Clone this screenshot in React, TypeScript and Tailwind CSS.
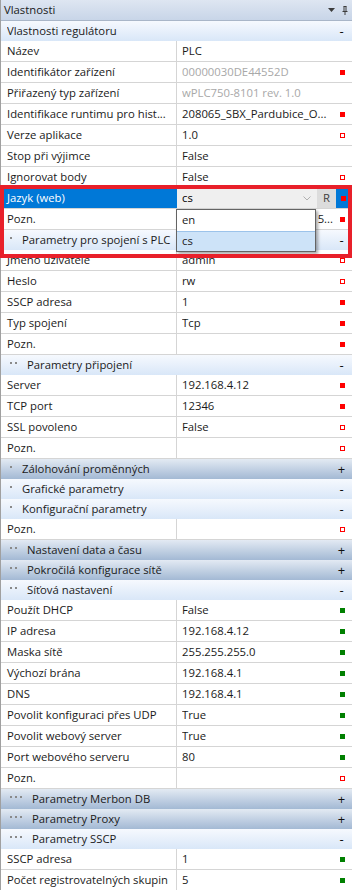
import React from "react";

type Marker = "fr" | "hr" | "fg" | null;
type Row =
  | { k: "s"; t: string; lvl: number; open: boolean }
  | { k: "p"; n: string; v?: string; gray?: boolean; m: Marker; sel?: boolean; right?: boolean };

const rows: Row[] = [
  { k: "s", t: "Vlastnosti regulátoru", lvl: 0, open: true },
  { k: "p", n: "Název", v: "PLC", m: null },
  { k: "p", n: "Identifikátor zařízení", v: "00000030DE44552D", gray: true, m: "fr" },
  { k: "p", n: "Přiřazený typ zařízení", v: "wPLC750-8101 rev. 1.0", gray: true, m: null },
  { k: "p", n: "Identifikace runtimu pro hist...", v: "208065_SBX_Pardubice_O...", m: "fr" },
  { k: "p", n: "Verze aplikace", v: "1.0", m: "hr" },
  { k: "p", n: "Stop při výjimce", v: "False", m: null },
  { k: "p", n: "Ignorovat body", v: "False", m: "hr" },
  { k: "p", n: "Jazyk (web)", v: "cs", m: "fr", sel: true },
  { k: "p", n: "Pozn.", v: "5...", m: "fr", right: true },
  { k: "s", t: "Parametry pro spojení s PLC", lvl: 1, open: true },
  { k: "p", n: "Jméno uživatele", v: "admin", m: "hr" },
  { k: "p", n: "Heslo", v: "rw", m: "hr" },
  { k: "p", n: "SSCP adresa", v: "1", m: "fr" },
  { k: "p", n: "Typ spojení", v: "Tcp", m: "fr" },
  { k: "p", n: "Pozn.", v: "", m: "fr" },
  { k: "s", t: "Parametry připojení", lvl: 2, open: true },
  { k: "p", n: "Server", v: "192.168.4.12", m: "fr" },
  { k: "p", n: "TCP port", v: "12346", m: "fr" },
  { k: "p", n: "SSL povoleno", v: "False", m: "hr" },
  { k: "p", n: "Pozn.", v: "", m: "hr" },
  { k: "s", t: "Zálohování proměnných", lvl: 1, open: false },
  { k: "s", t: "Grafické parametry", lvl: 1, open: true },
  { k: "s", t: "Konfigurační parametry", lvl: 1, open: true },
  { k: "p", n: "Pozn.", v: "", m: "hr" },
  { k: "s", t: "Nastavení data a času", lvl: 2, open: false },
  { k: "s", t: "Pokročilá konfigurace sítě", lvl: 2, open: false },
  { k: "s", t: "Síťová nastavení", lvl: 2, open: true },
  { k: "p", n: "Použít DHCP", v: "False", m: "fg" },
  { k: "p", n: "IP adresa", v: "192.168.4.12", m: "fg" },
  { k: "p", n: "Maska sítě", v: "255.255.255.0", m: "fg" },
  { k: "p", n: "Výchozí brána", v: "192.168.4.1", m: "fg" },
  { k: "p", n: "DNS", v: "192.168.4.1", m: "fg" },
  { k: "p", n: "Povolit konfiguraci přes UDP", v: "True", m: "fg" },
  { k: "p", n: "Povolit webový server", v: "True", m: "fg" },
  { k: "p", n: "Port webového serveru", v: "80", m: "fg" },
  { k: "p", n: "Pozn.", v: "", m: "hr" },
  { k: "s", t: "Parametry Merbon DB", lvl: 3, open: false },
  { k: "s", t: "Parametry Proxy", lvl: 3, open: false },
  { k: "s", t: "Parametry SSCP", lvl: 3, open: true },
  { k: "p", n: "SSCP adresa", v: "1", m: "fg" },
  { k: "p", n: "Počet registrovatelných skupin", v: "5", m: "fg" },
];

function Mark({ m }: { m: Marker }) {
  if (m === "fr") return <div className="h-[5px] w-[5px] shrink-0 bg-[#ff0000]" />;
  if (m === "fg") return <div className="h-[5px] w-[5px] shrink-0 bg-[#008000]" />;
  if (m === "hr") return <div className="h-[5px] w-[5px] shrink-0 border border-[#ff0000] bg-white" />;
  return <div className="h-[5px] w-[5px] shrink-0" />;
}

function Section({ t, lvl, open }: { t: string; lvl: number; open: boolean }) {
  const dots = Array.from({ length: lvl });
  return (
    <div
      className={
        "flex h-[20px] shrink-0 items-center pr-[5px] " +
        (open
          ? "bg-linear-to-b from-[#f6f9fe] to-[#d9e7f8]"
          : "bg-linear-to-b from-[#e3eaf3] to-[#a3b9d4]")
      }
    >
      {lvl === 0 ? (
        <div className="w-[6px] shrink-0" />
      ) : (
        <div className="flex shrink-0 items-center gap-[3px] pl-[9px]" style={{ width: 21 + (lvl - 1) * 5 }}>
          {dots.map((_, i) => (
            <div key={i} className="mb-[4px] h-[2px] w-[2px] shrink-0 bg-[#8a8a8a]" />
          ))}
        </div>
      )}
      <div className="flex-1 truncate text-[#1a1a1a]">{t}</div>
      <div className="flex w-[11px] justify-center text-[13px] leading-none text-[#101010]">
        {open ? "-" : "+"}
      </div>
    </div>
  );
}

function Prop({
  n,
  v,
  gray,
  m,
  sel,
  right,
}: {
  n: string;
  v?: string;
  gray?: boolean;
  m: Marker;
  sel?: boolean;
  right?: boolean;
}) {
  if (sel) {
    return (
      <div className="flex h-[21px] shrink-0 border-b border-[#d5d5d5]">
        <div className="flex w-[176px] shrink-0 items-center bg-[#0078d7] pl-[6px] text-white">{n}</div>
        <div className="flex w-[140px] shrink-0 items-center bg-[#efefef] pl-[5px] pr-[6px]">
          <span className="flex-1">{v}</span>
          <svg width="8" height="5" viewBox="0 0 8 5">
            <path d="M0.5 0.5 L4 4 L7.5 0.5" fill="none" stroke="#b0b0b0" strokeWidth="1" />
          </svg>
        </div>
        <div className="flex w-[19px] shrink-0 items-center justify-center bg-[#dcdcdc] text-[#404040]">R</div>
        <div className="flex flex-1 items-center bg-[#0078d7] pl-[5px]">
          <Mark m={m} />
        </div>
      </div>
    );
  }
  return (
    <div className="flex h-[21px] shrink-0 border-b border-[#d5d5d5]">
      <div className="flex w-[176px] shrink-0 items-center overflow-hidden whitespace-nowrap border-r border-[#d5d5d5] pl-[6px] text-[#1a1a1a]">
        {n}
      </div>
      <div className="flex min-w-0 flex-1 items-center gap-[7px] pl-[5px] pr-[7px]">
        <span
          className={
            "min-w-0 flex-1 overflow-hidden whitespace-nowrap " +
            (right ? "text-right " : "") +
            (gray ? "text-[#a8a8a8]" : "text-[#1a1a1a]")
          }
        >
          {v}
        </span>
        <Mark m={m} />
      </div>
    </div>
  );
}

export default function App() {
  return (
    <div className="relative h-[890px] w-[352px] overflow-hidden bg-white font-['Open_Sans',sans-serif] text-[11.3px]">
      <div className="flex h-full flex-col border-l border-[#a0a0a0]">
        <div className="flex h-[21px] shrink-0 items-center border-b border-[#a9b6c8] bg-linear-to-b from-[#dee6f2] to-[#c8d5e8] pl-[3px] pr-[3px]">
          <span className="flex-1 text-[#1a1a1a]">Vlastnosti</span>
          <svg width="7" height="4" viewBox="0 0 7 4" className="mr-[7px]">
            <path d="M0 0 H7 L3.5 4 Z" fill="#3c3c3c" />
          </svg>
          <svg width="6" height="9" viewBox="0 0 6 9" className="mr-[1px]">
            <path d="M1.5 0.5 H4.5 M2 0.5 V5 M4 0.5 V5 M0.5 5.5 H5.5 M3 5.5 V9" fill="none" stroke="#3c3c3c" strokeWidth="1" />
          </svg>
        </div>
        {rows.map((r, i) =>
          r.k === "s" ? (
            <Section key={i} t={r.t} lvl={r.lvl} open={r.open} />
          ) : (
            <Prop key={i} n={r.n} v={r.v} gray={r.gray} m={r.m} sel={r.sel} right={r.right} />
          )
        )}
      </div>

      {/* dropdown list */}
      <div className="absolute left-[176px] top-[209px] w-[140px] border border-[#646464] bg-white shadow-[2px_2px_3px_rgba(0,0,0,0.35)]">
        <div className="flex h-[21px] items-center pl-[5px] text-[#1a1a1a]">en</div>
        <div className="flex h-[20px] items-center border-t border-[#9cc3ea] bg-[#cde3f8] pl-[5px] text-[#1a1a1a]">cs</div>
      </div>

      {/* red annotation box */}
      <div className="pointer-events-none absolute left-0 top-[185px] h-[73px] w-[352px] border-[4px] border-[#e8202a]" />
    </div>
  );
}
